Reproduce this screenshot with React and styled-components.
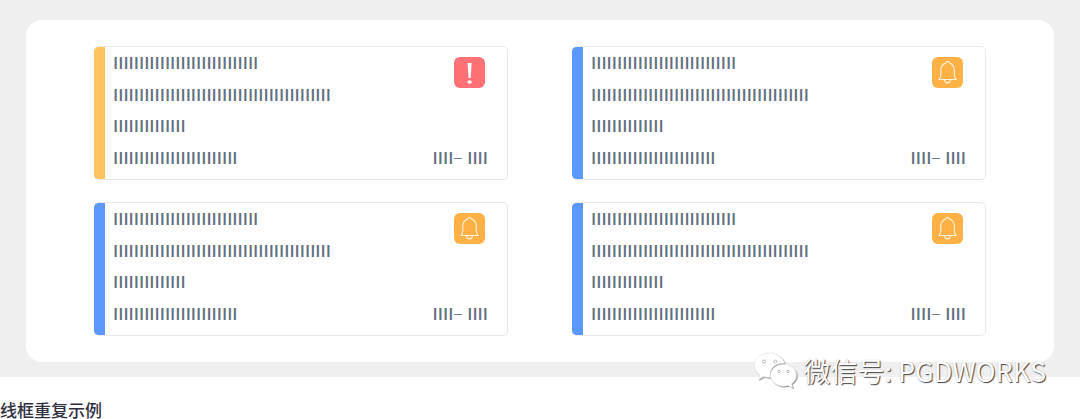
import React from "react"
import styled, { createGlobalStyle } from "styled-components"

const GlobalStyle = createGlobalStyle`
  body {
    margin: 0;
    background: #fff;
    font-family: "Open Sans", "Noto Sans CJK SC", sans-serif;
  }
`

const Figure = styled.figure`
  margin: 0;
`

const Stage = styled.div`
  position: relative;
  padding: 20px 26px 15px;
  background: #efefef;
`

const Panel = styled.div`
  display: grid;
  grid-template-columns: 1fr 1fr;
  gap: 22px 64px;
  padding: 26px 68px;
  border-radius: 16px;
  background: #fff;
`

const Card = styled.article`
  display: flex;
  border: 1px solid #e8e8e8;
  border-left: 0;
  border-radius: 5px;
  background: linear-gradient(
    to right,
    ${props => props.$accent} 11px,
    #fff 11px
  );
  padding: 1px 19px 6px;
  color: #5f6f7f;
  font-size: 17px;
  font-weight: 600;
  line-height: 30px;
`

const Lines = styled.div`
  display: flex;
  flex: 1;
  flex-direction: column;
  justify-content: space-between;
  min-height: 125px;

  p {
    margin: 0;
  }
`

const Side = styled.div`
  display: flex;
  flex-direction: column;
  align-items: flex-end;
  justify-content: space-between;
`

const Badge = styled.span`
  display: flex;
  width: 31px;
  height: 31px;
  margin: 9px 3px 0 0;
  border-radius: 6px;
  background: ${props => props.$color};
`

const Dash = styled.span`
  font-size: 19px;
  font-weight: 300;
  line-height: 1;
`

const Watermark = styled.div`
  position: absolute;
  right: 34px;
  bottom: -14px;
  display: flex;
  align-items: center;
  gap: 6px;
  color: #fff;
  font-family: "Noto Sans CJK SC", sans-serif;
  font-size: 27px;
  line-height: 40px;
  text-shadow: 1px 1px 1px #444, 0 0 1px #bbb;

  svg {
    filter: drop-shadow(1px 1px 0 #999);
  }
`

const Caption = styled.figcaption`
  padding-top: 23px;
  color: #2f2f3f;
  font-family: "Noto Sans CJK SC", sans-serif;
  font-size: 17px;
  font-weight: 500;
  line-height: 19px;
`

const AlertIcon = () => (
  <svg width="31" height="31" viewBox="0 0 31 31" fill="#fff">
    <path d="M13.6 6h4l-.9 15h-2.2z" />
    <ellipse cx="15.6" cy="25" rx="2.2" ry="1.7" />
  </svg>
)

const BellIcon = () => (
  <svg
    width="31"
    height="31"
    viewBox="0 0 31 31"
    fill="none"
    stroke="#fff4df"
    strokeWidth="1.1"
    strokeLinejoin="round"
    strokeLinecap="round"
  >
    <path d="M14 5.7a1.7 1.7 0 0 1 3.2 0c3.4 1.4 5.1 3.7 5.1 7.1v5.5c0 1.4.6 2.4 1.8 4.2H7c1.2-1.8 1.8-2.8 1.8-4.2v-5.5c0-3.4 1.8-5.7 5.2-7.1z" />
    <path d="M12.5 22.7c.3 4.2 5.7 4.2 6 0" />
  </svg>
)

const WeChatIcon = () => (
  <svg
    width="43"
    height="38"
    viewBox="0 0 43 38"
    fill="#fff"
    stroke="#ddd"
    strokeWidth=".5"
  >
    <path d="M15.5 1C7 1 .5 6.5.5 13.3c0 3.9 2.1 7.3 5.4 9.5L4.4 27.5l5.4-2.9c2.1.7 4.4 1 6.7.9-2.5-8.2 4.8-14.8 14-14.2C29 5.3 23 1 15.5 1z" />
    <path d="M29.5 12.5c-7.3 0-13 4.8-13 10.8s5.7 10.9 13 10.9c1.7 0 3.3-.3 4.8-.8l4.5 2.6-1.3-4.2c3-2 5-5 5-8.5 0-6-5.8-10.8-13-10.8z" />
    <g stroke="#aaa" strokeWidth=".8">
      <circle cx="10" cy="9.5" r="1.5" />
      <circle cx="21.5" cy="9.5" r="1.5" />
      <circle cx="25" cy="19.5" r="1.2" />
      <circle cx="34" cy="19.5" r="1.2" />
    </g>
  </svg>
)

const lineLengths = [28, 42, 14, 24]

const cards = [
  { id: 1, accent: "#ffc35f", alert: true },
  { id: 2, accent: "#5a98ff" },
  { id: 3, accent: "#5a98ff" },
  { id: 4, accent: "#5a98ff" },
]

const WireCard = ({ accent, alert }) => (
  <Card $accent={accent}>
    <Lines>
      {lineLengths.map(length => (
        <p key={length}>{"I".repeat(length)}</p>
      ))}
    </Lines>
    <Side>
      <Badge $color={alert ? "#ff7175" : "#ffb145"}>
        {alert ? <AlertIcon /> : <BellIcon />}
      </Badge>
      <span>
        IIII<Dash>–</Dash> IIII
      </span>
    </Side>
  </Card>
)

const App = () => (
  <>
    <GlobalStyle />
    <Figure>
      <Stage>
        <Panel>
          {cards.map(card => (
            <WireCard key={card.id} accent={card.accent} alert={card.alert} />
          ))}
        </Panel>
        <Watermark>
          <WeChatIcon />
          <span>微信号: PGDWORKS</span>
        </Watermark>
      </Stage>
      <Caption>线框重复示例</Caption>
    </Figure>
  </>
)

export default App
